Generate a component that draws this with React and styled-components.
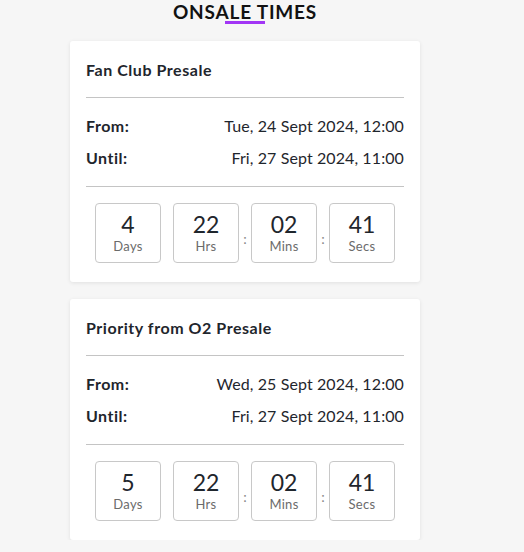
import React from "react";
import styled, { createGlobalStyle } from "styled-components";

const Global = createGlobalStyle`
  html, body { margin: 0; padding: 0; background: #f6f6f6; }
  body { font-family: "Lato", "Noto Sans", sans-serif; color: #1f262d; }
`;

const Page = styled.div`
  width: 350px;
  margin-left: 70px;
  display: flex;
  flex-direction: column;
  align-items: stretch;
`;

const Header = styled.div`
  display: flex;
  flex-direction: column;
  align-items: center;
  margin-bottom: 17px;
`;

const Title = styled.h2`
  margin: 0;
  font-size: 19px;
  line-height: 23px;
  font-weight: 700;
  letter-spacing: 0.8px;
  color: #121212;
`;

const Bar = styled.div`
  width: 40px;
  height: 3px;
  margin-top: -2px;
  background: #a236f5;
`;

const Cards = styled.div`
  display: flex;
  flex-direction: column;
  gap: 17px;
`;

const Card = styled.section`
  background: #fff;
  border-radius: 3px;
  box-shadow: 0 1px 4px rgba(0, 0, 0, 0.09);
  padding: 18px 16px 19px;
`;

const CardTitle = styled.h3`
  margin: 0;
  font-size: 16px;
  line-height: 22px;
  font-weight: 700;
  letter-spacing: 0.55px;
  color: #1f262d;
`;

const Divider = styled.hr`
  border: 0;
  height: 1px;
  background: #c4c4c4;
  margin: ${(p) => p.$m || "16px 0 17px"};
`;

const Rows = styled.div`
  display: flex;
  flex-direction: column;
  gap: 10px;
`;

const Row = styled.div`
  display: flex;
  justify-content: space-between;
  align-items: center;
  line-height: 22px;
  font-size: 16px;
`;

const Label = styled.span`
  font-weight: 700;
  letter-spacing: 0.5px;
`;

const Value = styled.span`
  font-weight: 400;
  font-size: 16px;
  letter-spacing: 0.1px;
`;

const Countdown = styled.div`
  display: flex;
  justify-content: center;
  align-items: stretch;
`;

const Box = styled.div`
  box-sizing: border-box;
  width: 66px;
  height: 60px;
  padding-top: 6px;
  border: 1px solid #c8c8c8;
  border-radius: 4px;
  display: flex;
  flex-direction: column;
  align-items: center;
  justify-content: flex-start;
`;

const Num = styled.div`
  font-size: 23px;
  line-height: 28px;
  color: #1f262d;
`;

const Unit = styled.div`
  font-size: 13px;
  line-height: 16px;
  letter-spacing: 0.3px;
  color: #6b6b6b;
`;

const Sep = styled.div`
  width: 12px;
  display: flex;
  align-items: center;
  justify-content: center;
  padding-top: 10px;
  font-size: 14px;
  color: #888;
`;

const sales = [
  {
    name: "Fan Club Presale",
    from: "Tue, 24 Sept 2024, 12:00",
    until: "Fri, 27 Sept 2024, 11:00",
    days: "4",
  },
  {
    name: "Priority from O2 Presale",
    from: "Wed, 25 Sept 2024, 12:00",
    until: "Fri, 27 Sept 2024, 11:00",
    days: "5",
  },
];

function Timer({ days }) {
  const parts = [
    [days, "Days", ""],
    ["22", "Hrs", ""],
    ["02", "Mins", ":"],
    ["41", "Secs", ":"],
  ];
  return (
    <Countdown>
      {parts.map(([n, u, s], i) => (
        <React.Fragment key={u}>
          {i > 0 && <Sep>{s}</Sep>}
          <Box>
            <Num>{n}</Num>
            <Unit>{u}</Unit>
          </Box>
        </React.Fragment>
      ))}
    </Countdown>
  );
}

export default function App() {
  return (
    <>
      <Global />
      <Page>
        <Header>
          <Title>ONSALE TIMES</Title>
          <Bar />
        </Header>
        <Cards>
          {sales.map((s) => (
            <Card key={s.name}>
              <CardTitle>{s.name}</CardTitle>
              <Divider />
              <Rows>
                <Row>
                  <Label>From:</Label>
                  <Value>{s.from}</Value>
                </Row>
                <Row>
                  <Label>Until:</Label>
                  <Value>{s.until}</Value>
                </Row>
              </Rows>
              <Divider $m="17px 0 16px" />
              <Timer days={s.days} />
            </Card>
          ))}
        </Cards>
      </Page>
    </>
  );
}
